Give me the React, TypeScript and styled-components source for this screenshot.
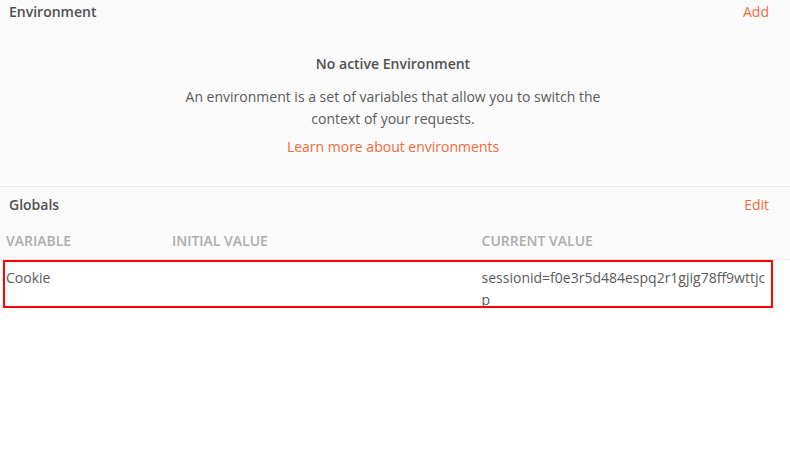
import React from "react";
import styled, { createGlobalStyle } from "styled-components";

const GlobalStyle = createGlobalStyle`
  * { box-sizing: border-box; }
  body {
    margin: 0;
    background: #fff;
    color: #5a5a5a;
    font-family: "Open Sans", sans-serif;
    font-size: 14px;
    line-height: 22px;
  }
`;

const Section = styled.section<{ $divided?: boolean }>`
  background: #fafafa;
  padding-bottom: ${(p) => (p.$divided ? "28px" : "0")};
  border-bottom: ${(p) => (p.$divided ? "1px solid #eaeaea" : "0")};
`;

const SectionHeader = styled.header<{ $top: number }>`
  display: flex;
  justify-content: space-between;
  align-items: center;
  padding: ${(p) => p.$top}px 21px 0 9px;
`;

const Title = styled.h2`
  margin: 0;
  color: #505050;
  font-size: 14px;
  font-weight: 600;
`;

const TextButton = styled.button`
  border: 0;
  padding: 0;
  background: none;
  color: #f26b3a;
  font: inherit;
  cursor: pointer;
`;

const EmptyState = styled.div`
  display: flex;
  flex-direction: column;
  align-items: center;
  padding: 30px 4px 0 0;
  text-align: center;
`;

const EmptyTitle = styled.h3`
  margin: 0 0 11px;
  color: #505050;
  font-size: 14px;
  font-weight: 600;
`;

const Description = styled.p`
  max-width: 420px;
  margin: 0 0 6px;
`;

const Link = styled.a`
  color: #f26b3a;
  text-decoration: none;
`;

const Table = styled.table`
  width: 100%;
  border-spacing: 0;
  table-layout: fixed;
`;

const HeadCell = styled.th<{ $width: string }>`
  width: ${(p) => p.$width};
  padding: 14px 6px 7px;
  border-bottom: 1px solid #eaeaea;
  color: #adadad;
  font-weight: 600;
  text-align: left;
`;

const HighlightedRow = styled.tr`
  position: relative;
  background: #fff;

  &::after {
    content: "";
    position: absolute;
    inset: 0 17px 0 3px;
    border: 2px solid #ff0000;
    pointer-events: none;
  }
`;

const Cell = styled.td`
  padding: 7px 20px 0 6px;
  vertical-align: top;
`;

const Value = styled.div`
  max-height: 41px;
  overflow: hidden;
  overflow-wrap: anywhere;
`;

const columns = [
  { label: "VARIABLE", width: "21%" },
  { label: "INITIAL VALUE", width: "39.2%" },
  { label: "CURRENT VALUE", width: "39.8%" },
];

export default function App() {
  return (
    <>
      <GlobalStyle />
      <main>
        <Section $divided>
          <SectionHeader $top={1}>
            <Title>Environment</Title>
            <TextButton type="button">Add</TextButton>
          </SectionHeader>
          <EmptyState>
            <EmptyTitle>No active Environment</EmptyTitle>
            <Description>
              An environment is a set of variables that allow you to switch the
              context of your requests.
            </Description>
            <Link href="#environments">Learn more about environments</Link>
          </EmptyState>
        </Section>
        <Section>
          <SectionHeader $top={7}>
            <Title id="globals-title">Globals</Title>
            <TextButton type="button">Edit</TextButton>
          </SectionHeader>
          <Table aria-labelledby="globals-title">
            <thead>
              <tr>
                {columns.map((c) => (
                  <HeadCell key={c.label} scope="col" $width={c.width}>
                    {c.label}
                  </HeadCell>
                ))}
              </tr>
            </thead>
            <tbody>
              <HighlightedRow>
                <Cell>Cookie</Cell>
                <Cell />
                <Cell>
                  <Value>sessionid=f0e3r5d484espq2r1gjig78ff9wttjcp</Value>
                </Cell>
              </HighlightedRow>
            </tbody>
          </Table>
        </Section>
      </main>
    </>
  );
}
